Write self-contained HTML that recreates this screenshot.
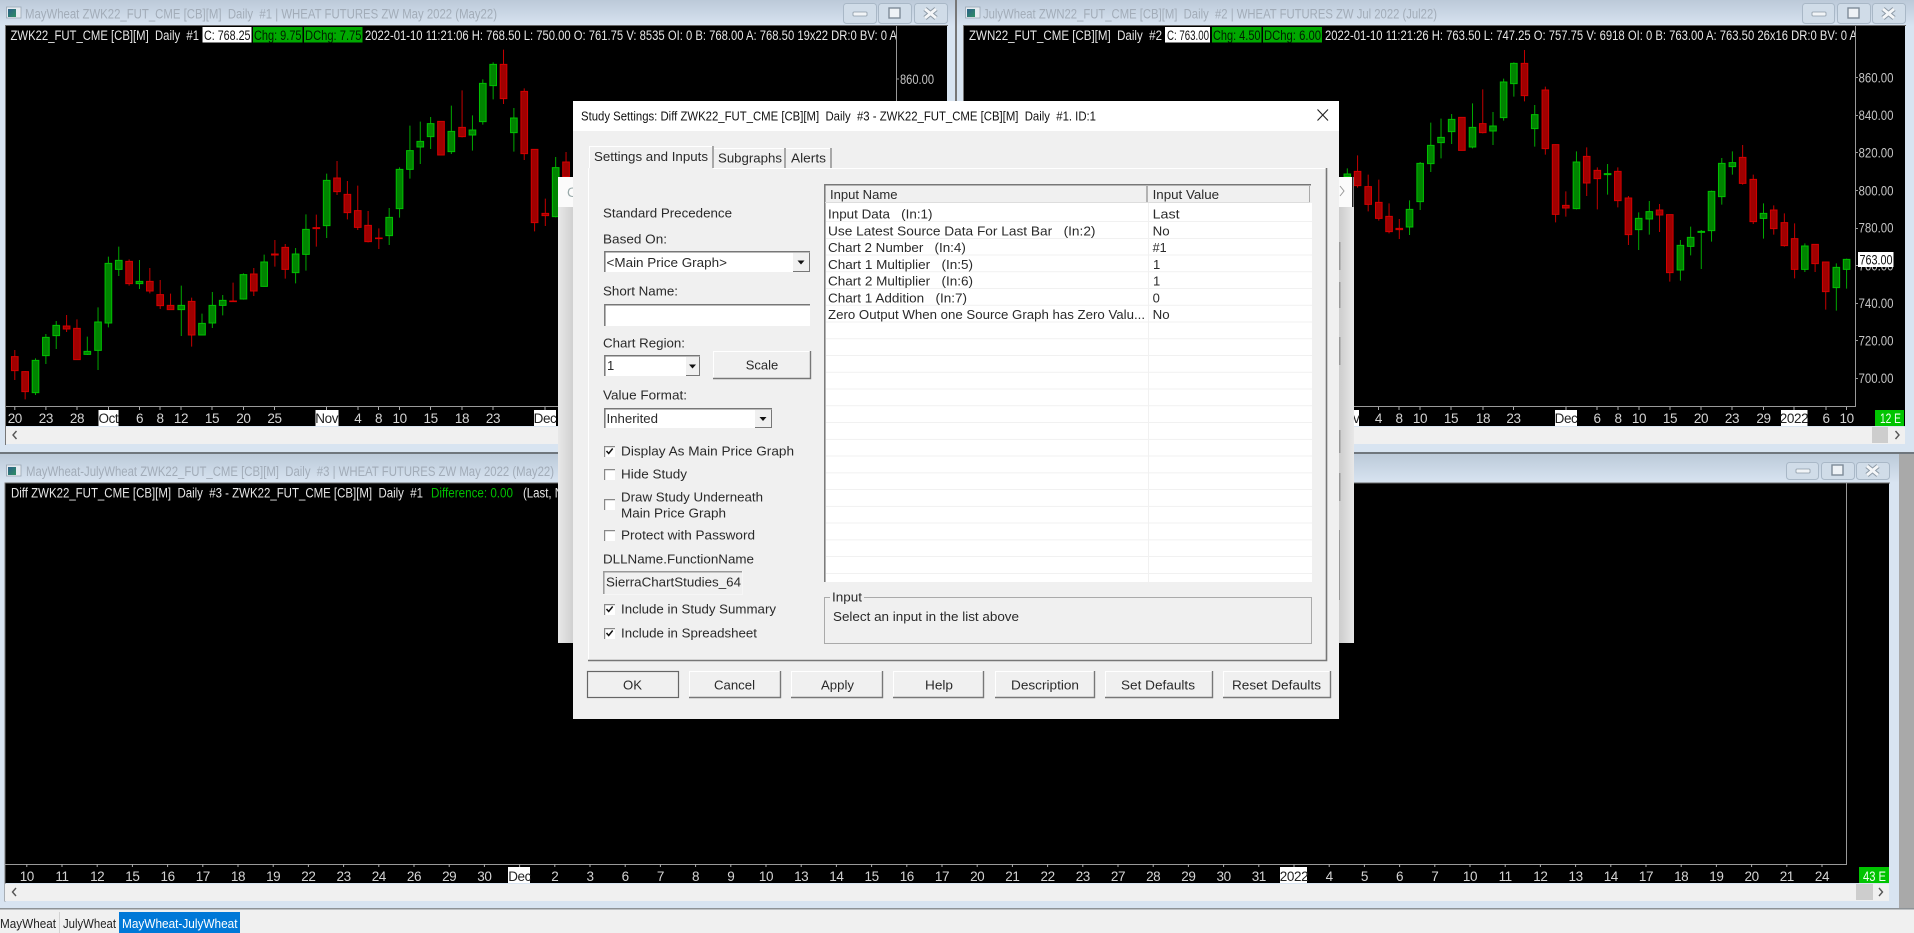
<!DOCTYPE html>
<html><head><meta charset="utf-8"><title>Study Settings</title>
<style>
html,body{margin:0;padding:0;background:#f0f0f0;overflow:hidden}
svg{display:block;filter:blur(.35px)}
text{font-family:"Liberation Sans",sans-serif;font-size:13.5px;white-space:pre;fill:#222}
.t{fill:#a2acb8}.w{fill:#e6e6e6}.a{fill:#d4d4d4;text-anchor:middle;letter-spacing:-.4px}.k{fill:#111}.ak{fill:#222;text-anchor:middle;letter-spacing:-.4px}.p{fill:#c4c4c4}.g{fill:#001c00}
.n{vector-effect:non-scaling-stroke}
.d{font-size:13px;fill:#2a2a2a}.m{text-anchor:middle}
</style></head><body>
<svg width="1914" height="933" viewBox="0 0 1914 933" xmlns="http://www.w3.org/2000/svg">
<defs>
<linearGradient id="tb" x1="0" y1="0" x2="0" y2="1"><stop offset="0" stop-color="#bccad9"/><stop offset="1" stop-color="#d8e4f1"/></linearGradient>
<linearGradient id="bl" x1="0" y1="0" x2="1" y2="0"><stop offset="0" stop-color="#e8e8e8"/><stop offset="1" stop-color="#d0d0d0"/></linearGradient>
<linearGradient id="br" x1="0" y1="0" x2="1" y2="0"><stop offset="0" stop-color="#cccccc"/><stop offset="1" stop-color="#e8e8e8"/></linearGradient>
<linearGradient id="ic" x1="0" y1="0" x2="1" y2="1"><stop offset="0" stop-color="#2b5f8a"/><stop offset="1" stop-color="#2f8f62"/></linearGradient>
<clipPath id="c1"><rect x="6" y="26" width="890" height="30"/></clipPath>
<clipPath id="c2"><rect x="964" y="26" width="891" height="30"/></clipPath>
</defs>
<rect width="1914" height="933" fill="#f0f0f0"/>
<rect x="1899" y="452" width="15" height="457" fill="#a9a9a9"/>

<!-- window 1 -->
<rect x="0" y="0" width="956" height="452" fill="#d8e4f1"/>
<rect x="0" y="0" width="956" height="26" fill="url(#tb)"/>
<rect x="6" y="26" width="941" height="400" fill="#000"/>
<rect x="5" y="25" width="943" height="1" fill="#666"/>
<rect x="5" y="25" width="1" height="420" fill="#777"/>
<rect x="6" y="427" width="941" height="17" fill="#f0f0f0"/>
<rect x="955" y="0" width="2" height="452" fill="#777"/>
<rect x="6.5" y="7" width="14.5" height="11" fill="#e6ebf0" stroke="#9aa7b4" stroke-width=".8"/><rect x="8" y="9" width="8" height="8" fill="url(#ic)"/>
<text class="t" x="25" y="18.5" textLength="472" lengthAdjust="spacingAndGlyphs">MayWheat ZWK22_FUT_CME [CB][M]  Daily  #1 | WHEAT FUTURES ZW May 2022 (May22)</text>
<g fill="#d0dce8" stroke="#a9b8c7"><rect x="843.5" y="3.5" width="33" height="20" rx="3"/><rect x="878.5" y="3.5" width="33" height="20" rx="3"/><rect x="914.5" y="3.5" width="33" height="20" rx="3"/></g>
<rect x="853" y="12" width="14" height="4" rx="1" fill="#f1f4f7" stroke="#8c99a6" stroke-width=".8"/><rect x="889" y="8" width="11" height="10" fill="#eef2f6" stroke="#7e8b98" stroke-width="1.4"/><path d="M925 9l11 9M936 9l-11 9" stroke="#8c99a6" stroke-width="5"/><path d="M925 9l11 9M936 9l-11 9" stroke="#f4f6f8" stroke-width="3"/>
<path class="n" d="M6 406.5H896.5V26" fill="none" stroke="#999"/>

<g clip-path="url(#c1)"><text class="w" x="365" y="40" textLength="532" lengthAdjust="spacingAndGlyphs">2022-01-10 11:21:06 H: 768.50 L: 750.00 O: 761.75 V: 8535 OI: 0 B: 768.00 A: 768.50 19x22 DR:0 BV: 0 A</text></g>
<text class="w" x="10.5" y="40" textLength="188.5" lengthAdjust="spacingAndGlyphs">ZWK22_FUT_CME [CB][M]  Daily  #1</text>
<rect x="202.5" y="27" width="49" height="15.5" fill="#fff"/><text class="k" x="204" y="40" textLength="46.5" lengthAdjust="spacingAndGlyphs">C: 768.25</text>
<rect x="253" y="27" width="49.5" height="15.5" fill="#00a800"/><text class="g" x="254" y="40" textLength="47.5" lengthAdjust="spacingAndGlyphs">Chg: 9.75</text>
<rect x="304" y="27" width="58.5" height="15.5" fill="#00a800"/><text class="g" x="305" y="40" textLength="56.5" lengthAdjust="spacingAndGlyphs">DChg: 7.75</text>
<text class="p" x="900" y="84" textLength="34" lengthAdjust="spacingAndGlyphs">860.00</text><rect x="896" y="78.5" width="3" height="1" fill="#999"/>

<path fill="#aaa" d="M14.3 407h1v3h-1zM45.4 407h1v3h-1zM76.5 407h1v3h-1zM108 407h1v3h-1zM139 407h1v3h-1zM159.5 407h1v3h-1zM180.5 407h1v3h-1zM211.5 407h1v3h-1zM243 407h1v3h-1zM274 407h1v3h-1zM326 407h1v3h-1zM357.5 407h1v3h-1zM378 407h1v3h-1zM399 407h1v3h-1zM430 407h1v3h-1zM461.5 407h1v3h-1zM492.5 407h1v3h-1zM544.5 407h1v3h-1z"/>
<rect x="98.5" y="410" width="20" height="16" fill="#fff"/><rect x="315.5" y="410" width="23" height="16" fill="#fff"/><rect x="534" y="410" width="22" height="16" fill="#fff"/>
<g class="axis"><text class="a" x="14.8" y="423">20</text><text class="a" x="45.9" y="423">23</text><text class="a" x="77" y="423">28</text><text class="ak" x="108.4" y="423">Oct</text><text class="a" x="139.5" y="423">6</text><text class="a" x="160" y="423">8</text><text class="a" x="181" y="423">12</text><text class="a" x="212" y="423">15</text><text class="a" x="243.4" y="423">20</text><text class="a" x="274.5" y="423">25</text><text class="ak" x="326.7" y="423">Nov</text><text class="a" x="357.8" y="423">4</text><text class="a" x="378.5" y="423">8</text><text class="a" x="399.6" y="423">10</text><text class="a" x="430.6" y="423">15</text><text class="a" x="462" y="423">18</text><text class="a" x="493" y="423">23</text><text class="ak" x="545" y="423">Dec</text></g>
<path d="M16.5 431l-3.5 4 3.5 4" fill="none" stroke="#555" stroke-width="1.4"/>

<!-- left candles -->
<g transform="scale(.36996 .33333)">
<path class="n" fill="none" stroke="#c40000" d="M40 1050V1140M68 1113V1198M180 945V996M208 958V1080M349 778V857M405 804V880M433 840V927M461 881V930M518 893V1040M630 848V905M686 804V888M743 720V800M771 732V836M855 644V740M911 483V585M939 543V658M967 557V690M995 633V727M1024 685V747M1192 364V466M1249 271V412M1361 149V312M1417 265V480M1445 447V694M1474 596V678M1530 456V530"/>
<path class="n" fill="none" stroke="#00a800" d="M96 1075V1185M124 1002V1092M152 963V1047M236 1010V1065M265 922V1110M293 770V982M321 740V828M377 780V867M490 857V1008M546 941V1005M574 876V984M602 885V946M658 820V899M714 764V860M799 744V850M827 643V812M883 521V714M1052 624V735M1080 502V653M1108 377V536M1136 365V492M1164 351V447M1220 317V462M1277 346V452M1305 238V374M1333 187V298M1389 324V455M1502 471V652"/>
<path class="n" fill="#a00000" stroke="#d40000" d="M31 1070h18V1112h-18zM59 1115h18V1175h-18zM171 978h18V987h-18zM199 985h18V1079h-18zM340 784h18V851h-18zM396 844h18V873h-18zM424 884h18V917h-18zM452 916h18V929h-18zM509 904h18V1005h-18zM621 903h18V905h-18zM677 822h18V873h-18zM734 762h18V765h-18zM762 742h18V808h-18zM846 683h18V686h-18zM902 534h18V575h-18zM930 583h18V638h-18zM958 632h18V682h-18zM986 676h18V725h-18zM1015 714h18V716h-18zM1183 364h18V465h-18zM1240 382h18V410h-18zM1352 193h18V296h-18zM1408 274h18V461h-18zM1436 448h18V668h-18zM1465 640h18V647h-18zM1521 486h18V530h-18z"/>
<path class="n" fill="#008400" stroke="#00c000" d="M87 1081h18V1178h-18zM115 1012h18V1067h-18zM143 976h18V1007h-18zM227 1054h18V1063h-18zM256 966h18V1051h-18zM284 790h18V969h-18zM312 781h18V808h-18zM368 844h18V851h-18zM481 916h18V929h-18zM537 970h18V1005h-18zM565 916h18V969h-18zM593 901h18V916h-18zM649 824h18V897h-18zM705 786h18V859h-18zM790 762h18V818h-18zM818 688h18V763h-18zM874 541h18V677h-18zM1043 652h18V707h-18zM1071 508h18V626h-18zM1099 452h18V508h-18zM1127 424h18V441h-18zM1155 371h18V410h-18zM1211 394h18V455h-18zM1268 390h18V405h-18zM1296 250h18V365h-18zM1324 193h18V257h-18zM1380 354h18V398h-18zM1493 503h18V650h-18z"/>
</g>

<!-- window 2 -->
<rect x="957" y="0" width="957" height="452" fill="#d8e4f1"/>
<rect x="957" y="0" width="957" height="26" fill="url(#tb)"/>
<rect x="964" y="26" width="941" height="400" fill="#000"/>
<rect x="963" y="25" width="943" height="1" fill="#666"/>
<rect x="963" y="25" width="1" height="420" fill="#777"/>
<rect x="964" y="427" width="941" height="17" fill="#f0f0f0"/>
<rect x="965.5" y="7" width="14.5" height="11" fill="#e6ebf0" stroke="#9aa7b4" stroke-width=".8"/><rect x="967" y="9" width="8" height="8" fill="url(#ic)"/>
<text class="t" x="983" y="18.5" textLength="454" lengthAdjust="spacingAndGlyphs">JulyWheat ZWN22_FUT_CME [CB][M]  Daily  #2 | WHEAT FUTURES ZW Jul 2022 (Jul22)</text>
<g fill="#d0dce8" stroke="#a9b8c7"><rect x="1802.5" y="3.5" width="32" height="20" rx="3"/><rect x="1837.5" y="3.5" width="33" height="20" rx="3"/><rect x="1872.5" y="3.5" width="33" height="20" rx="3"/></g>
<rect x="1812" y="12" width="14" height="4" rx="1" fill="#f1f4f7" stroke="#8c99a6" stroke-width=".8"/><rect x="1848" y="8" width="11" height="10" fill="#eef2f6" stroke="#7e8b98" stroke-width="1.4"/><path d="M1883 9l11 9M1894 9l-11 9" stroke="#8c99a6" stroke-width="5"/><path d="M1883 9l11 9M1894 9l-11 9" stroke="#f4f6f8" stroke-width="3"/>
<path class="n" d="M964 406.5H1855.5V26" fill="none" stroke="#999"/>
<g clip-path="url(#c2)"><text class="w" x="1325" y="40" textLength="532" lengthAdjust="spacingAndGlyphs">2022-01-10 11:21:26 H: 763.50 L: 747.25 O: 757.75 V: 6918 OI: 0 B: 763.00 A: 763.50 26x16 DR:0 BV: 0 A</text></g>
<text class="w" x="969" y="40" textLength="193" lengthAdjust="spacingAndGlyphs">ZWN22_FUT_CME [CB][M]  Daily  #2</text>
<rect x="1165" y="27" width="45" height="15.5" fill="#fff"/><text class="k" x="1167" y="40" textLength="42" lengthAdjust="spacingAndGlyphs">C: 763.00</text>
<rect x="1212" y="27" width="49.5" height="15.5" fill="#00a800"/><text class="g" x="1213" y="40" textLength="47.5" lengthAdjust="spacingAndGlyphs">Chg: 4.50</text>
<rect x="1263" y="27" width="59" height="15.5" fill="#00a800"/><text class="g" x="1264" y="40" textLength="57" lengthAdjust="spacingAndGlyphs">DChg: 6.00</text>

<g fill="#999"><rect x="1856" y="77" width="2" height="1"/><rect x="1856" y="115" width="2" height="1"/><rect x="1856" y="152" width="2" height="1"/><rect x="1856" y="190" width="2" height="1"/><rect x="1856" y="228" width="2" height="1"/><rect x="1856" y="265" width="2" height="1"/><rect x="1856" y="303" width="2" height="1"/><rect x="1856" y="340" width="2" height="1"/><rect x="1856" y="378" width="2" height="1"/></g>
<g><text class="p" x="1858.5" y="82.3" textLength="35" lengthAdjust="spacingAndGlyphs">860.00</text><text class="p" x="1858.5" y="120" textLength="35" lengthAdjust="spacingAndGlyphs">840.00</text><text class="p" x="1858.5" y="157.7" textLength="35" lengthAdjust="spacingAndGlyphs">820.00</text><text class="p" x="1858.5" y="195.3" textLength="35" lengthAdjust="spacingAndGlyphs">800.00</text><text class="p" x="1858.5" y="232.7" textLength="35" lengthAdjust="spacingAndGlyphs">780.00</text><text class="p" x="1858.5" y="270.3" textLength="35" lengthAdjust="spacingAndGlyphs">760.00</text><text class="p" x="1858.5" y="308" textLength="35" lengthAdjust="spacingAndGlyphs">740.00</text><text class="p" x="1858.5" y="345.3" textLength="35" lengthAdjust="spacingAndGlyphs">720.00</text><text class="p" x="1858.5" y="383" textLength="35" lengthAdjust="spacingAndGlyphs">700.00</text></g>
<rect x="1858" y="252" width="35.5" height="15" fill="#fff"/><text class="k" x="1859.5" y="264.5" textLength="33" lengthAdjust="spacingAndGlyphs">763.00</text>
<rect x="1875" y="410" width="29" height="16" fill="#00c400"/><text fill="#fff" style="fill:#f0fff0" x="1880" y="423" textLength="21" lengthAdjust="spacingAndGlyphs">12 E</text>

<path fill="#aaa" d="M1378 407h1v3h-1zM1398.5 407h1v3h-1zM1419.5 407h1v3h-1zM1450.5 407h1v3h-1zM1482.5 407h1v3h-1zM1513 407h1v3h-1zM1565.5 407h1v3h-1zM1596.5 407h1v3h-1zM1617.5 407h1v3h-1zM1638.5 407h1v3h-1zM1669.5 407h1v3h-1zM1700.5 407h1v3h-1zM1731.5 407h1v3h-1zM1763 407h1v3h-1zM1793.5 407h1v3h-1zM1825.5 407h1v3h-1zM1846 407h1v3h-1z"/>
<rect x="1337" y="410" width="22" height="16" fill="#fff"/><rect x="1555" y="410" width="22" height="16" fill="#fff"/><rect x="1781" y="410" width="26.5" height="16" fill="#fff"/>
<g><text class="ak" x="1348" y="423">Nov</text><text class="a" x="1378.4" y="423">4</text><text class="a" x="1399" y="423">8</text><text class="a" x="1420" y="423">10</text><text class="a" x="1451" y="423">15</text><text class="a" x="1483" y="423">18</text><text class="a" x="1513.5" y="423">23</text><text class="ak" x="1566" y="423">Dec</text><text class="a" x="1597" y="423">6</text><text class="a" x="1618" y="423">8</text><text class="a" x="1639" y="423">10</text><text class="a" x="1670" y="423">15</text><text class="a" x="1701" y="423">20</text><text class="a" x="1732" y="423">23</text><text class="a" x="1763.5" y="423">29</text><text class="ak" x="1794" y="423">2022</text><text class="a" x="1826" y="423">6</text><text class="a" x="1846.6" y="423">10</text></g>
<rect x="1872" y="427" width="16" height="16" fill="#cdcdcd"/><path d="M1895.5 431l3.5 4-3.5 4" fill="none" stroke="#555" stroke-width="1.4"/>

<!-- right candles -->
<g transform="translate(1340 0) scale(.36603 .33333)">
<path class="n" fill="none" stroke="#c40000" d="M48 466V563M77 524V634M106 539V662M134 610V700M162 657V717M333 352V452M390 268V400M504 150V304M561 260V464M589 433V667M617 574V650M674 442V588M703 502V628M759 502V622M788 588V735M873 612V696M901 643V845M1100 435V554M1129 524V672M1185 616V704M1214 640V740M1242 670V835M1298 732V816M1327 785V929"/>
<path class="n" fill="none" stroke="#00a800" d="M20 505V530M190 601V705M219 486V630M248 368V516M276 356V475M305 342V432M362 310V445M418 336V435M447 236V362M475 187V290M532 315V440M646 454V628M731 492V584M816 637V750M845 603V704M930 720V842M958 680V766M987 690V807M1015 572V725M1043 474V614M1072 454V524M1157 610V716M1270 730V816M1356 790V932M1384 776V866"/>
<path class="n" fill="#a00000" stroke="#d40000" d="M39 514h18V557h-18zM68 560h18V613h-18zM97 607h18V655h-18zM125 649h18V695h-18zM153 685h18V689h-18zM324 352h18V451h-18zM381 371h18V398h-18zM495 190h18V287h-18zM552 270h18V446h-18zM580 434h18V643h-18zM608 616h18V624h-18zM665 469h18V549h-18zM694 511h18V536h-18zM750 514h18V602h-18zM779 594h18V704h-18zM864 630h18V645h-18zM892 644h18V818h-18zM1091 472h18V550h-18zM1120 538h18V665h-18zM1176 630h18V686h-18zM1205 668h18V737h-18zM1233 716h18V808h-18zM1289 733h18V791h-18zM1318 786h18V875h-18z"/>
<path class="n" fill="#008400" stroke="#00c000" d="M11 522h18V530h-18zM181 628h18V681h-18zM210 490h18V605h-18zM239 436h18V491h-18zM267 412h18V428h-18zM296 358h18V395h-18zM353 382h18V441h-18zM409 378h18V393h-18zM438 246h18V353h-18zM466 190h18V251h-18zM523 344h18V386h-18zM637 486h18V626h-18zM722 521h18V524h-18zM807 655h18V689h-18zM836 635h18V657h-18zM921 736h18V810h-18zM949 712h18V739h-18zM978 694h18V697h-18zM1006 574h18V692h-18zM1034 490h18V590h-18zM1063 488h18V500h-18zM1148 640h18V655h-18zM1261 738h18V808h-18zM1347 802h18V863h-18zM1375 778h18V808h-18z"/>
</g>

<!-- window 3 -->
<rect x="0" y="452" width="1899" height="457" fill="#d8e4f1"/>
<rect x="0" y="452" width="1914" height="2" fill="#6f767d"/>
<rect x="0" y="454" width="1899" height="29" fill="url(#tb)"/>
<rect x="1899" y="454" width="15" height="455" fill="#a9a9a9"/>
<rect x="5" y="483" width="1884" height="400" fill="#000"/>
<rect x="5" y="482.5" width="1885" height="1" fill="#666"/>
<rect x="4.5" y="482.5" width="1" height="419" fill="#777"/>
<rect x="5" y="884" width="1884" height="17" fill="#f0f0f0"/>
<rect x="0" y="908" width="1914" height="1.5" fill="#8d9296"/>
<rect x="6.5" y="465" width="14.5" height="11" fill="#e6ebf0" stroke="#9aa7b4" stroke-width=".8"/><rect x="8" y="467" width="8" height="8" fill="url(#ic)"/>
<text class="t" x="26" y="476" textLength="528" lengthAdjust="spacingAndGlyphs">MayWheat-JulyWheat ZWK22_FUT_CME [CB][M]  Daily  #3 | WHEAT FUTURES ZW May 2022 (May22)</text>
<g fill="#d0dce8" stroke="#a9b8c7"><rect x="1786.5" y="462.5" width="32" height="17" rx="3"/><rect x="1821.5" y="462.5" width="33" height="17" rx="3"/><rect x="1856.5" y="462.5" width="33" height="17" rx="3"/></g>
<rect x="1796" y="469" width="14" height="4" rx="1" fill="#f1f4f7" stroke="#8c99a6" stroke-width=".8"/><rect x="1832" y="465" width="11" height="10" fill="#eef2f6" stroke="#7e8b98" stroke-width="1.4"/><path d="M1867 466l11 9M1878 466l-11 9" stroke="#8c99a6" stroke-width="5"/><path d="M1867 466l11 9M1878 466l-11 9" stroke="#f4f6f8" stroke-width="3"/>
<path class="n" d="M5 864.5H1846.5V483" fill="none" stroke="#999"/>
<text class="w" x="11" y="497.5" textLength="412" lengthAdjust="spacingAndGlyphs">Diff ZWK22_FUT_CME [CB][M]  Daily  #3 - ZWK22_FUT_CME [CB][M]  Daily  #1</text>
<text style="fill:#00c000" x="431" y="497.5" textLength="82" lengthAdjust="spacingAndGlyphs">Difference: 0.00</text>
<text class="w" x="523" y="497.5" textLength="40" lengthAdjust="spacingAndGlyphs">(Last, N</text>

<path fill="none" stroke="#aaa" d="M26.8 864v3M62 864v3M97.2 864v3M132.4 864v3M167.6 864v3M202.8 864v3M238 864v3M273.2 864v3M308.4 864v3M343.6 864v3M378.8 864v3M414 864v3M449.2 864v3M484.4 864v3M519.6 864v3M554.8 864v3M590 864v3M625.2 864v3M660.4 864v3M695.6 864v3M730.8 864v3M766 864v3M801.2 864v3M836.4 864v3M871.6 864v3M906.8 864v3M942 864v3M977.2 864v3M1012.4 864v3M1047.6 864v3M1082.8 864v3M1118 864v3M1153.2 864v3M1188.4 864v3M1223.6 864v3M1258.8 864v3M1294 864v3M1329.2 864v3M1364.4 864v3M1399.6 864v3M1434.8 864v3M1470 864v3M1505.2 864v3M1540.4 864v3M1575.6 864v3M1610.8 864v3M1646 864v3M1681.2 864v3M1716.4 864v3M1751.6 864v3M1786.8 864v3M1822 864v3"/>
<rect x="508" y="867" width="22" height="16" fill="#fff"/><rect x="1280" y="867" width="27" height="16" fill="#fff"/>
<g><text class="a" x="26.8" y="881">10</text><text class="a" x="62" y="881">11</text><text class="a" x="97.2" y="881">12</text><text class="a" x="132.4" y="881">15</text><text class="a" x="167.6" y="881">16</text><text class="a" x="202.8" y="881">17</text><text class="a" x="238" y="881">18</text><text class="a" x="273.2" y="881">19</text><text class="a" x="308.4" y="881">22</text><text class="a" x="343.6" y="881">23</text><text class="a" x="378.8" y="881">24</text><text class="a" x="414" y="881">26</text><text class="a" x="449.2" y="881">29</text><text class="a" x="484.4" y="881">30</text><text class="ak" x="519.6" y="881">Dec</text><text class="a" x="554.8" y="881">2</text><text class="a" x="590" y="881">3</text><text class="a" x="625.2" y="881">6</text><text class="a" x="660.4" y="881">7</text><text class="a" x="695.6" y="881">8</text><text class="a" x="730.8" y="881">9</text><text class="a" x="766" y="881">10</text><text class="a" x="801.2" y="881">13</text><text class="a" x="836.4" y="881">14</text><text class="a" x="871.6" y="881">15</text><text class="a" x="906.8" y="881">16</text><text class="a" x="942" y="881">17</text><text class="a" x="977.2" y="881">20</text><text class="a" x="1012.4" y="881">21</text><text class="a" x="1047.6" y="881">22</text><text class="a" x="1082.8" y="881">23</text><text class="a" x="1118" y="881">27</text><text class="a" x="1153.2" y="881">28</text><text class="a" x="1188.4" y="881">29</text><text class="a" x="1223.6" y="881">30</text><text class="a" x="1258.8" y="881">31</text><text class="ak" x="1294" y="881">2022</text><text class="a" x="1329.2" y="881">4</text><text class="a" x="1364.4" y="881">5</text><text class="a" x="1399.6" y="881">6</text><text class="a" x="1434.8" y="881">7</text><text class="a" x="1470" y="881">10</text><text class="a" x="1505.2" y="881">11</text><text class="a" x="1540.4" y="881">12</text><text class="a" x="1575.6" y="881">13</text><text class="a" x="1610.8" y="881">14</text><text class="a" x="1646" y="881">17</text><text class="a" x="1681.2" y="881">18</text><text class="a" x="1716.4" y="881">19</text><text class="a" x="1751.6" y="881">20</text><text class="a" x="1786.8" y="881">21</text><text class="a" x="1822" y="881">24</text></g>
<rect x="1859" y="867" width="30" height="16" fill="#00c400"/><text style="fill:#f0fff0" x="1863" y="881" textLength="23" lengthAdjust="spacingAndGlyphs">43 E</text>
<rect x="1856" y="884" width="17" height="16" fill="#cdcdcd"/><path d="M1879 888l3.5 4-3.5 4" fill="none" stroke="#555" stroke-width="1.4"/>
<path d="M16 888l-3.5 4 3.5 4" fill="none" stroke="#555" stroke-width="1.4"/>

<!-- sheet tabs -->
<rect x="0" y="909.5" width="1914" height="23.5" fill="#f0f0f0"/>
<rect x="59" y="912" width="1" height="21" fill="#d2d2d2"/>
<rect x="119" y="912" width="121" height="21" fill="#0078d7"/>
<text class="d" style="fill:#222" x="0" y="928" textLength="56" lengthAdjust="spacingAndGlyphs">MayWheat</text>
<text class="d" style="fill:#222" x="63" y="928" textLength="53" lengthAdjust="spacingAndGlyphs">JulyWheat</text>
<text class="d" style="fill:#fff" x="122" y="928" textLength="115.5" lengthAdjust="spacingAndGlyphs">MayWheat-JulyWheat</text>

<!-- window behind dialog -->
<rect x="558" y="177" width="796" height="466" fill="#e4e4e4"/>
<rect x="558" y="207" width="15" height="436" fill="url(#bl)"/>
<rect x="1339" y="207" width="15" height="436" fill="url(#br)"/>
<rect x="558" y="177" width="794" height="30" fill="#fbfbfb"/>
<rect x="1352" y="177" width="1.5" height="30" fill="#222"/>
<text style="fill:#9aa" x="567" y="197">C</text>
<path d="M1340 186l4 5-4 5" fill="none" stroke="#999" stroke-width="1"/>
<g fill="#9a9a9a"><rect x="1339" y="242" width="1.5" height="28"/><rect x="1339" y="282" width="1.5" height="26"/><rect x="1339" y="337" width="1.5" height="28"/><rect x="1339" y="430" width="1.5" height="23"/><rect x="1339" y="473" width="1.5" height="28"/><rect x="1339" y="530" width="1" height="70"/></g>

<!-- dialog -->
<rect x="573" y="101" width="766" height="618" fill="#f0f0f0"/>
<rect x="573" y="101" width="766" height="30" fill="#fff"/>
<text class="d" style="fill:#111" x="581" y="120.5" textLength="515" lengthAdjust="spacingAndGlyphs">Study Settings: Diff ZWK22_FUT_CME [CB][M]  Daily  #3 - ZWK22_FUT_CME [CB][M]  Daily  #1. ID:1</text>
<path d="M1317.5 109.5l10.5 11M1328 109.5l-10.5 11" stroke="#222" stroke-width="1.1"/>

<!-- tabs + pane -->
<path d="M588.5 660V168.5H589M713 168.5H1326" fill="none" stroke="#fff"/>
<path d="M588 660.5H1326.5V168" fill="none" stroke="#777" stroke-width="1.6"/>
<path d="M589.5 168V146.5H712" fill="none" stroke="#fff"/>
<path d="M713 146V168" stroke="#777" stroke-width="1.2"/>
<path d="M714 148.5H784M786 148.5H830" fill="none" stroke="#fff"/>
<path d="M785 148V168M831 148V168" stroke="#777" stroke-width="1.2"/>
<text class="d" x="594" y="161" textLength="114" lengthAdjust="spacingAndGlyphs">Settings and Inputs</text>
<text class="d" x="718" y="162.5" textLength="64" lengthAdjust="spacingAndGlyphs">Subgraphs</text>
<text class="d" x="791" y="162.5" textLength="35" lengthAdjust="spacingAndGlyphs">Alerts</text>

<!-- left column -->
<text class="d" x="603" y="217.5" textLength="129" lengthAdjust="spacingAndGlyphs">Standard Precedence</text>
<text class="d" x="603" y="243.5" textLength="64" lengthAdjust="spacingAndGlyphs">Based On:</text>
<text class="d" x="603" y="295.5" textLength="75" lengthAdjust="spacingAndGlyphs">Short Name:</text>
<text class="d" x="603" y="347.5" textLength="82" lengthAdjust="spacingAndGlyphs">Chart Region:</text>
<text class="d" x="603" y="399.5" textLength="84" lengthAdjust="spacingAndGlyphs">Value Format:</text>
<g fill="#fff"><rect x="604" y="251" width="206" height="21"/><rect x="604" y="304" width="206" height="22"/><rect x="604" y="355" width="96" height="21"/><rect x="604" y="408" width="168" height="20"/></g>
<path d="M604.8 272V251.8H810M604.8 326V304.8H810M604.8 376V355.8H700M604.8 428V408.8H772" fill="none" stroke="#777" stroke-width="1.5"/>
<path d="M809.5 252V272M699.5 356V376M771.5 409V428" fill="none" stroke="#999"/>
<g fill="#f0f0f0"><rect x="793" y="253" width="16" height="18"/><rect x="686" y="357" width="13" height="18"/><rect x="755" y="410" width="16" height="17"/></g>
<path d="M793 271.5H809.5V253M686 375.5H699.5V357M755 427.5H771.5V410" fill="none" stroke="#777"/>
<path d="M797.5 260.5h7l-3.5 4zM689 364.5h7l-3.5 4zM759.5 417h7l-3.5 4z" fill="#111"/>
<text class="d" fill="#111" x="606.5" y="267" textLength="120.5" lengthAdjust="spacingAndGlyphs">&lt;Main Price Graph&gt;</text>
<text class="d" x="607" y="370">1</text>
<text class="d" x="606.5" y="423" textLength="51.5" lengthAdjust="spacingAndGlyphs">Inherited</text>

<!-- raised buttons -->
<g fill="#f0f0f0"><rect x="713" y="351" width="98" height="28"/><rect x="587" y="671" width="92" height="27"/><rect x="689" y="671" width="92" height="27"/><rect x="791" y="671" width="92" height="27"/><rect x="893" y="671" width="91" height="27"/><rect x="995" y="671" width="100" height="27"/><rect x="1105" y="671" width="108" height="27"/><rect x="1223" y="671" width="108" height="27"/></g>
<path d="M713.5 379V351.5H811M689.5 698V671.5H781M791.5 698V671.5H883M893.5 698V671.5H984M995.5 698V671.5H1095M1105.5 698V671.5H1213M1223.5 698V671.5H1331" fill="none" stroke="#fff"/>
<path d="M713 378.5H810.5V351M689 697.5H780.5V671M791 697.5H882.5V671M893 697.5H983.5V671M995 697.5H1094.5V671M1105 697.5H1212.5V671M1223 697.5H1330.5V671" fill="none" stroke="#777" stroke-width="1.4"/>
<rect x="587.5" y="671.5" width="91" height="26" fill="none" stroke="#666" stroke-width="1.2"/>
<text class="d" x="762" y="369.5" text-anchor="middle">Scale</text>
<text class="d" x="623" y="689.5" textLength="19" lengthAdjust="spacingAndGlyphs">OK</text>
<text class="d" x="714" y="689.5" textLength="41" lengthAdjust="spacingAndGlyphs">Cancel</text>
<text class="d" x="821" y="689.5" textLength="33" lengthAdjust="spacingAndGlyphs">Apply</text>
<text class="d" x="925" y="689.5" textLength="28" lengthAdjust="spacingAndGlyphs">Help</text>
<text class="d" x="1011" y="689.5" textLength="68" lengthAdjust="spacingAndGlyphs">Description</text>
<text class="d" x="1121" y="689.5" textLength="74" lengthAdjust="spacingAndGlyphs">Set Defaults</text>
<text class="d" x="1232" y="689.5" textLength="89" lengthAdjust="spacingAndGlyphs">Reset Defaults</text>

<!-- checkboxes -->
<g fill="#fff"><rect x="604" y="446" width="11" height="11"/><rect x="604" y="469" width="11" height="11"/><rect x="604" y="499" width="11" height="11"/><rect x="604" y="530" width="11" height="11"/><rect x="604" y="604" width="11" height="11"/><rect x="604" y="628" width="11" height="11"/></g>
<path d="M604.6 457V446.6H615M604.6 480V469.6H615M604.6 510V499.6H615M604.6 541V530.6H615M604.6 615V604.6H615M604.6 639V628.6H615" fill="none" stroke="#888" stroke-width="1.2"/>
<path d="M606.5 451l2.2 2.5 4-5M606.5 609l2.2 2.5 4-5M606.5 633l2.2 2.5 4-5" fill="none" stroke="#111" stroke-width="1.5"/>
<text class="d" x="621" y="455.5" textLength="173" lengthAdjust="spacingAndGlyphs">Display As Main Price Graph</text>
<text class="d" x="621" y="478.5" textLength="66" lengthAdjust="spacingAndGlyphs">Hide Study</text>
<text class="d" x="621" y="501.5" textLength="142" lengthAdjust="spacingAndGlyphs">Draw Study Underneath</text>
<text class="d" x="621" y="517.5" textLength="105" lengthAdjust="spacingAndGlyphs">Main Price Graph</text>
<text class="d" x="621" y="539.5" textLength="134" lengthAdjust="spacingAndGlyphs">Protect with Password</text>
<text class="d" x="603" y="563.5" textLength="151" lengthAdjust="spacingAndGlyphs">DLLName.FunctionName</text>
<path d="M603.8 594V571.8H743" fill="none" stroke="#999" stroke-width="1.5"/><path d="M603 594.5H742.5V571" fill="none" stroke="#f6f6f6"/>
<text class="d" x="606" y="586.5" textLength="135" lengthAdjust="spacingAndGlyphs">SierraChartStudies_64</text>
<text class="d" x="621" y="613.5" textLength="155" lengthAdjust="spacingAndGlyphs">Include in Study Summary</text>
<text class="d" x="621" y="637.5" textLength="136" lengthAdjust="spacingAndGlyphs">Include in Spreadsheet</text>

<!-- list -->
<rect x="825" y="203" width="487" height="379" fill="#fff"/>
<rect x="825" y="186" width="485" height="16.5" fill="#f0f0f0"/>
<path d="M824.8 582V184.8H1311" fill="none" stroke="#777" stroke-width="1.5"/>
<path d="M825 202.5H1310" stroke="#ddd"/>
<path d="M1147 186V202" stroke="#888" stroke-width="1.2"/><path d="M1309.5 186V202" stroke="#aaa"/>
<path d="M826 221.5H1312M826 238.5H1312M826 255H1312M826 271.8H1312M826 288.5H1312M826 305.3H1312M826 322H1312M826 338.8H1312M826 355.5H1312M826 372.3H1312M826 389H1312M826 405.8H1312M826 422.5H1312M826 439.4H1312M826 456H1312M826 472.9H1312M826 489.5H1312M826 506.4H1312M826 523H1312M826 539.9H1312M826 556.5H1312M826 573.5H1312M1148.5 203V582" stroke="#f1f1f1" fill="none"/>
<text class="d" x="830" y="199" textLength="67.5" lengthAdjust="spacingAndGlyphs">Input Name</text>
<text class="d" x="1152.6" y="199" textLength="66.5" lengthAdjust="spacingAndGlyphs">Input Value</text>
<text class="d" x="828" y="218.5" textLength="104.5" lengthAdjust="spacingAndGlyphs">Input Data   (In:1)</text>
<text class="d" x="828" y="235.3" textLength="267.5" lengthAdjust="spacingAndGlyphs">Use Latest Source Data For Last Bar   (In:2)</text>
<text class="d" x="828" y="252" textLength="137.8" lengthAdjust="spacingAndGlyphs">Chart 2 Number   (In:4)</text>
<text class="d" x="828" y="268.8" textLength="145" lengthAdjust="spacingAndGlyphs">Chart 1 Multiplier   (In:5)</text>
<text class="d" x="828" y="285.5" textLength="145" lengthAdjust="spacingAndGlyphs">Chart 2 Multiplier   (In:6)</text>
<text class="d" x="828" y="302.3" textLength="139" lengthAdjust="spacingAndGlyphs">Chart 1 Addition   (In:7)</text>
<text class="d" x="828" y="319" textLength="317" lengthAdjust="spacingAndGlyphs">Zero Output When one Source Graph has Zero Valu...</text>
<text class="d" x="1152.6" y="218.5" textLength="27" lengthAdjust="spacingAndGlyphs">Last</text>
<text class="d" x="1152.6" y="235.3" textLength="17" lengthAdjust="spacingAndGlyphs">No</text>
<text class="d" x="1152.6" y="252" textLength="14" lengthAdjust="spacingAndGlyphs">#1</text>
<text class="d" x="1153" y="268.8">1</text>
<text class="d" x="1153" y="285.5">1</text>
<text class="d" x="1152.6" y="302.3">0</text>
<text class="d" x="1152.6" y="319" textLength="17" lengthAdjust="spacingAndGlyphs">No</text>

<!-- group -->
<rect x="824.5" y="597.5" width="487" height="46" fill="none" stroke="#aaa"/>
<rect x="830" y="590" width="34" height="14" fill="#f0f0f0"/>
<text class="d" x="832" y="601.5" textLength="30" lengthAdjust="spacingAndGlyphs">Input</text>
<text class="d" x="833" y="621" textLength="186" lengthAdjust="spacingAndGlyphs">Select an input in the list above</text>
</svg>
</body></html>
